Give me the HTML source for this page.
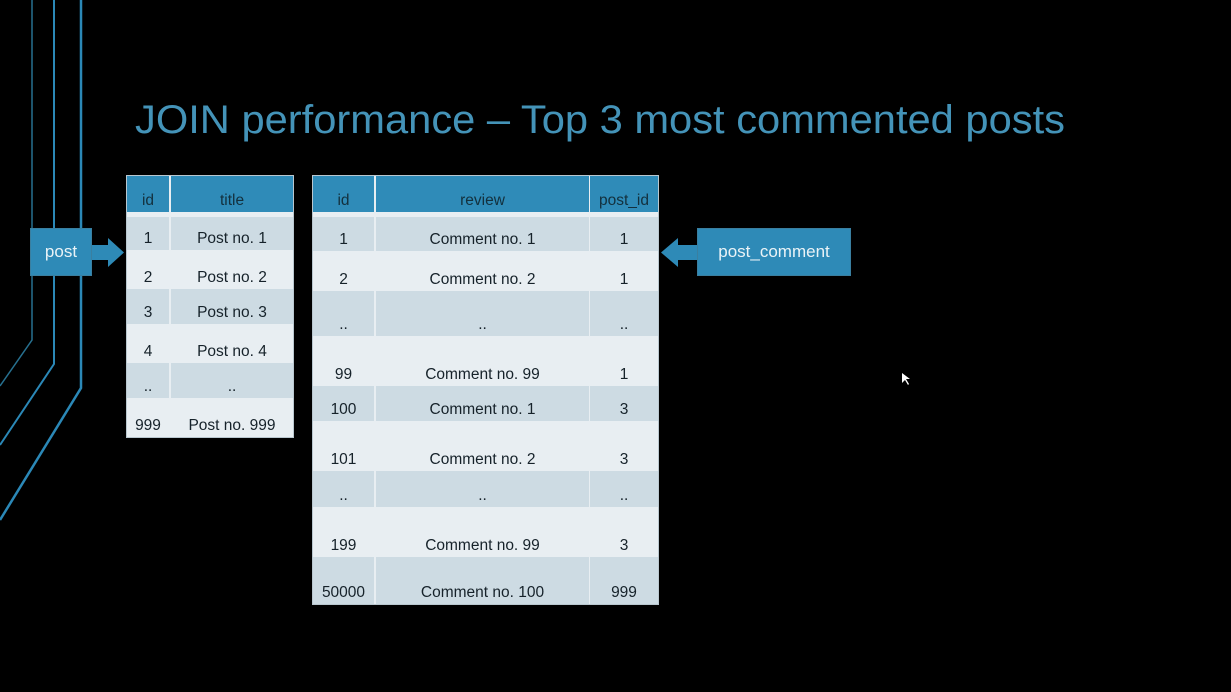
<!DOCTYPE html>
<html><head><meta charset="utf-8"><style>
body{margin:0;background:#000;width:1231px;height:692px;overflow:hidden;position:relative;font-family:"Liberation Sans",sans-serif}
.c{position:absolute;display:flex;align-items:flex-end;justify-content:center;font-size:15.5px;color:#16222a;padding-bottom:2px;box-sizing:border-box}
.h{background:#2f8bb8;color:#13303d}
.d{background:#cddbe3}
.l{background:#e8eef2}
.box{position:absolute;background:#2e8ab7;color:#eaf3f7;font-size:17px;display:flex;align-items:center;justify-content:center;box-sizing:border-box;border:1px solid #3a7fa0}
</style></head><body>
<svg width="1231" height="692" style="position:absolute;left:0;top:0">
<g fill="none" stroke="#2b88b7">
<polyline points="32,0 32,340 0,386" stroke-width="1.5" stroke="#27708f"/>
<polyline points="54,0 54,364 0,445" stroke-width="2"/>
<polyline points="81,0 81,388 0,520" stroke-width="2.5"/>
</g>
<polygon points="91,245 108,245 108,238 124,252.5 108,267 108,260 91,260" fill="#2e8ab7"/>
<polygon points="697,245 678,245 678,238 661,252.5 678,267 678,260 697,260" fill="#2e8ab7"/>
<text x="135" y="133" font-family="Liberation Sans, sans-serif" font-size="40" fill="#4493b8" textLength="930" lengthAdjust="spacingAndGlyphs">JOIN performance – Top 3 most commented posts</text>
<polygon points="902,373 902,383 905,380 908,385 909,384 906,379 910,379" fill="#fff"/>
</svg>
<div class="box" style="left:30px;top:228px;width:62px;height:48px">post</div>
<div class="box" style="left:697px;top:228px;width:154px;height:48px">post_comment</div>
<div style="position:absolute;left:126px;top:175px;width:168px;height:263px;background:#e8eef2;border:1px solid #b9c7cf;box-sizing:border-box"></div>
<div class="c h" style="left:127px;top:176px;width:42px;height:36px">id</div>
<div class="c h" style="left:171px;top:176px;width:122px;height:36px">title</div>
<div class="c d" style="left:127px;top:217px;width:42px;height:33px">1</div>
<div class="c d" style="left:171px;top:217px;width:122px;height:33px">Post no. 1</div>
<div class="c" style="left:127px;top:250px;width:42px;height:39px">2</div>
<div class="c" style="left:171px;top:250px;width:122px;height:39px">Post no. 2</div>
<div class="c d" style="left:127px;top:289px;width:42px;height:35px">3</div>
<div class="c d" style="left:171px;top:289px;width:122px;height:35px">Post no. 3</div>
<div class="c" style="left:127px;top:324px;width:42px;height:39px">4</div>
<div class="c" style="left:171px;top:324px;width:122px;height:39px">Post no. 4</div>
<div class="c d" style="left:127px;top:363px;width:42px;height:35px">..</div>
<div class="c d" style="left:171px;top:363px;width:122px;height:35px">..</div>
<div class="c" style="left:127px;top:398px;width:42px;height:39px">999</div>
<div class="c" style="left:171px;top:398px;width:122px;height:39px">Post no. 999</div>

<div style="position:absolute;left:312px;top:175px;width:347px;height:430px;background:#e8eef2;border:1px solid #b9c7cf;box-sizing:border-box"></div>
<div class="c h" style="left:313px;top:176px;width:61px;height:36px">id</div>
<div class="c h" style="left:376px;top:176px;width:213px;height:36px">review</div>
<div class="c h" style="left:590px;top:176px;width:68px;height:36px">post_id</div>
<div class="c d" style="left:313px;top:217px;width:61px;height:34px">1</div>
<div class="c d" style="left:376px;top:217px;width:213px;height:34px">Comment no. 1</div>
<div class="c d" style="left:590px;top:217px;width:68px;height:34px">1</div>
<div class="c" style="left:313px;top:251px;width:61px;height:40px">2</div>
<div class="c" style="left:376px;top:251px;width:213px;height:40px">Comment no. 2</div>
<div class="c" style="left:590px;top:251px;width:68px;height:40px">1</div>
<div class="c d" style="left:313px;top:291px;width:61px;height:45px">..</div>
<div class="c d" style="left:376px;top:291px;width:213px;height:45px">..</div>
<div class="c d" style="left:590px;top:291px;width:68px;height:45px">..</div>
<div class="c" style="left:313px;top:336px;width:61px;height:50px">99</div>
<div class="c" style="left:376px;top:336px;width:213px;height:50px">Comment no. 99</div>
<div class="c" style="left:590px;top:336px;width:68px;height:50px">1</div>
<div class="c d" style="left:313px;top:386px;width:61px;height:35px">100</div>
<div class="c d" style="left:376px;top:386px;width:213px;height:35px">Comment no. 1</div>
<div class="c d" style="left:590px;top:386px;width:68px;height:35px">3</div>
<div class="c" style="left:313px;top:421px;width:61px;height:50px">101</div>
<div class="c" style="left:376px;top:421px;width:213px;height:50px">Comment no. 2</div>
<div class="c" style="left:590px;top:421px;width:68px;height:50px">3</div>
<div class="c d" style="left:313px;top:471px;width:61px;height:36px">..</div>
<div class="c d" style="left:376px;top:471px;width:213px;height:36px">..</div>
<div class="c d" style="left:590px;top:471px;width:68px;height:36px">..</div>
<div class="c" style="left:313px;top:507px;width:61px;height:50px">199</div>
<div class="c" style="left:376px;top:507px;width:213px;height:50px">Comment no. 99</div>
<div class="c" style="left:590px;top:507px;width:68px;height:50px">3</div>
<div class="c d" style="left:313px;top:557px;width:61px;height:47px">50000</div>
<div class="c d" style="left:376px;top:557px;width:213px;height:47px">Comment no. 100</div>
<div class="c d" style="left:590px;top:557px;width:68px;height:47px">999</div>
</body></html>
